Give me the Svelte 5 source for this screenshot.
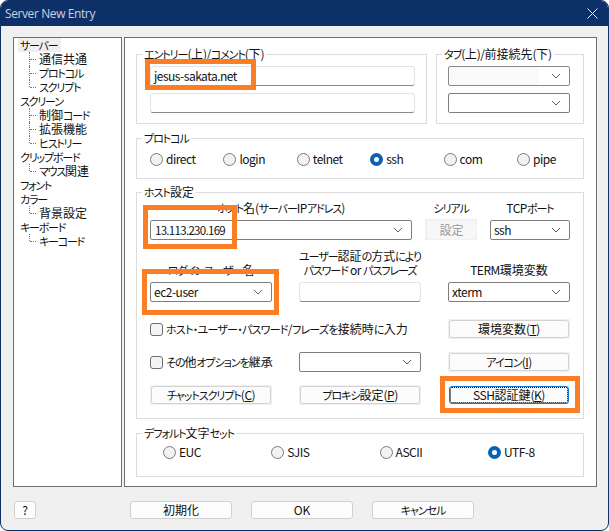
<script>
	const tree = [
		{ label: 'サーバー', selected: true, kids: ['通信共通', 'プロトコル', 'スクリプト'] },
		{ label: 'スクリーン', kids: ['制御コード', '拡張機能', 'ヒストリー'] },
		{ label: 'クリップボード', kids: ['マウス関連'] },
		{ label: 'フォント', kids: [] },
		{ label: 'カラー', kids: ['背景設定'] },
		{ label: 'キーボード', kids: ['キーコード'] }
	];

	const protocols = ['direct', 'login', 'telnet', 'ssh', 'com', 'pipe'];
	const charsets = ['EUC', 'SJIS', 'ASCII', 'UTF-8'];

	// orange callouts drawn over the screenshot
	const marks = [
		{ x: 145, y: 59, w: 111, h: 31 },
		{ x: 143, y: 205, w: 94, h: 44 },
		{ x: 142, y: 269, w: 137, h: 46 },
		{ x: 440, y: 376, w: 140, h: 37 }
	];

	const runPattern = /[\u3040-\u30ff・]+|[\u4e00-\u9fff]+|[^\u3040-\u30ff・\u4e00-\u9fff]+/g;

	function runs(text) {
		return (text.match(runPattern) ?? []).map((part) => {
			let kind = 'latin';
			if (/[\u3040-\u30ff・]/.test(part)) kind = 'kana';
			else if (/[\u4e00-\u9fff]/.test(part)) kind = 'kanji';
			return { part, kind };
		});
	}
</script>

{#snippet t(text)}{#each runs(text) as r}<span class={r.kind}>{r.part}</span>{/each}{/snippet}

{#snippet chevron()}
	<svg class="chevron" width="10" height="6" viewBox="0 0 10 6"><path d="M1 1 L5 5 L9 1" fill="none" stroke="#606060" stroke-width="1" /></svg>
{/snippet}

{#snippet combo(value, cls = '')}
	<div class="combo {cls}"><div class="value">{@render t(value)}</div>{@render chevron()}</div>
{/snippet}

{#snippet radio(label, on)}
	<label class="radio"><i class:on></i><div>{@render t(label)}</div></label>
{/snippet}

{#snippet btn(label, key, cls = '')}
	<div class="btn {cls}"><div class="face">{@render t(label + '(')}<u>{@render t(key)}</u>{@render t(')')}</div></div>
{/snippet}

<div class="window">
	<header class="titlebar">
		<span>Server New Entry</span>
		<svg width="11" height="11" viewBox="0 0 11 11"><path d="M0.5 0.5 L10.5 10.5 M10.5 0.5 L0.5 10.5" stroke="#e8ecf3" stroke-width="1" /></svg>
	</header>

	<div class="content">
		<nav class="tree">
			<ul>
				{#each tree as node}
					<li>
						<div class="node" class:selected={node.selected}>{@render t(node.label)}</div>
						{#if node.kids.length}
							<ul class="kids">
								{#each node.kids as kid}
									<li class="kid">{@render t(kid)}</li>
								{/each}
							</ul>
						{/if}
					</li>
				{/each}
			</ul>
		</nav>

		<main class="panel">
			<div class="top-row">
				<fieldset class="entry">
					<legend>{@render t('エントリー(上)/コメント(下)')}</legend>
					<div class="stack">
						<div class="input name">{@render t('jesus-sakata.net')}</div>
						<div class="input"></div>
					</div>
				</fieldset>
				<fieldset class="tab">
					<legend>{@render t('タブ(上)/前接続先(下)')}</legend>
					<div class="stack">
						{@render combo('', 'dim')}
						{@render combo('')}
					</div>
				</fieldset>
			</div>

			<fieldset class="protocol">
				<legend>{@render t('プロトコル')}</legend>
				<div class="protocol-row">
					{#each protocols as p}
						{@render radio(p, p === 'ssh')}
					{/each}
				</div>
			</fieldset>

			<fieldset class="host">
				<legend>{@render t('ホスト設定')}</legend>
				<div class="host-top">
					<div class="cap">{@render t('ホスト名(サーバーIPアドレス)')}</div>
					<div class="cap">{@render t('シリアル')}</div>
					<div class="cap">{@render t('TCPポート')}</div>
					{@render combo('13.113.230.169', 'ip')}
					<div class="disabled-btn"><div class="face">{@render t('設定')}</div></div>
					{@render combo('ssh')}
				</div>
				<div class="host-grid">
					<div class="cap low">{@render t('ログインユーザー名')}</div>
					<div class="cap low auth">{@render t('ユーザー認証の方式により')}<br />{@render t('パスワード or パスフレーズ')}</div>
					<div class="cap low term">{@render t('TERM環境変数')}</div>

					{@render combo('ec2-user')}
					<div class="input col3"></div>
					{@render combo('xterm', 'col5')}

					<label class="check long span3 gap-top"><i></i><div>{@render t('ホスト・ユーザー・パスワード/フレーズを接続時に入力')}</div></label>
					{@render btn('環境変数', 'T', 'col5 gap-top')}

					<label class="check"><i></i><div>{@render t('その他オプションを継承')}</div></label>
					{@render combo('', 'col3')}
					{@render btn('アイコン', 'I', 'col5')}

					{@render btn('チャットスクリプト', 'C')}
					{@render btn('プロキシ設定', 'P', 'col3')}
					{@render btn('SSH認証鍵', 'K', 'col5 focused')}
				</div>
			</fieldset>

			<fieldset class="charset">
				<legend>{@render t('デフォルト文字セット')}</legend>
				<div class="charset-row">
					{#each charsets as c}
						{@render radio(c, c === 'UTF-8')}
					{/each}
				</div>
			</fieldset>
		</main>
	</div>

	<footer class="actions">
		<button class="help">?</button>
		<button class="first">{@render t('初期化')}</button>
		<button>OK</button>
		<button>{@render t('キャンセル')}</button>
	</footer>

	{#each marks as m}
		<div class="mark" style="left:{m.x - 1}px;top:{m.y - 1}px;width:{m.w}px;height:{m.h}px"></div>
	{/each}
</div>

<style>
	:global(body) {
		margin: 0;
		background: #fff;
	}

	.window {
		position: relative;
		box-sizing: border-box;
		width: 609px;
		height: 531px;
		border: 1px solid #0e3069;
		border-radius: 8px;
		background: #f0f0f0;
		overflow: hidden;
		font: 12px/14px "Noto Sans CJK JP", "Noto Sans", sans-serif;
		font-feature-settings: "palt";
		color: #111;
	}

	.kana {
		font-size: 11px;
		letter-spacing: -1.05px;
	}

	.latin {
		letter-spacing: -0.5px;
	}

	.titlebar {
		display: flex;
		align-items: center;
		justify-content: space-between;
		height: 25px;
		padding: 0 10px 0 4px;
		background: #0e3069;
		color: #c9d2e0;
		font: 12px/25px "Open Sans", sans-serif;
		letter-spacing: -0.4px;
	}

	.content {
		display: flex;
		gap: 2px;
		height: 450px;
		padding: 11px 0 0 12px;
	}

	.tree {
		box-sizing: border-box;
		width: 109px;
		height: 450px;
		border: 1px solid #6e6e6e;
		background: #fff;
	}

	.tree ul {
		margin: 0;
		padding: 0;
		list-style: none;
	}

	.tree .kana {
		letter-spacing: -1.2px;
	}

	.node {
		width: fit-content;
		height: 14px;
		margin-left: 4px;
		padding: 0 3px 0 2px;
	}

	.selected {
		background: #efefef;
	}

	.kid {
		position: relative;
		height: 14px;
		padding-left: 25px;
	}

	.kid::before {
		content: '';
		position: absolute;
		left: 15px;
		top: 0;
		bottom: 0;
		border-left: 1px dotted #777;
	}

	.kid:last-child::before {
		bottom: 7px;
	}

	.kid::after {
		content: '';
		position: absolute;
		left: 16px;
		top: 7px;
		width: 6px;
		border-top: 1px dotted #777;
	}

	.panel {
		box-sizing: border-box;
		width: 473px;
		height: 450px;
		padding: 9px 12px 0 11px;
		border: 1px solid #6e6e6e;
		background: #fff;
	}

	fieldset {
		box-sizing: border-box;
		margin: 0;
		padding: 0;
		min-width: 0;
		border: 1px solid #dcdcdc;
	}

	legend {
		margin-left: 5px;
		padding: 0 2px;
		height: 14px;
		white-space: nowrap;
	}

	.top-row {
		display: flex;
		gap: 9px;
	}

	.entry {
		width: 291px;
		height: 77px;
		padding-top: 5px;
	}

	.tab {
		width: 148px;
		height: 77px;
		padding-top: 5px;
	}

	.stack {
		display: flex;
		flex-direction: column;
		gap: 7px;
		width: 122px;
		margin-left: 11px;
	}

	.entry .stack {
		width: 265px;
		margin-left: 13px;
	}

	.input {
		box-sizing: border-box;
		height: 20px;
		padding: 0 3px;
		border: 1px solid #e4e4e4;
		border-bottom-color: #8a8a8a;
		border-radius: 3px;
		line-height: 18px;
		background: #fff;
	}

	.combo {
		box-sizing: border-box;
		display: flex;
		align-items: center;
		justify-content: space-between;
		height: 20px;
		padding: 0 8px 0 3px;
		border: 1px solid #7f7f7f;
		border-radius: 2px;
		background: #fff;
	}

	.dim {
		border-color: #8a8a8a;
		background: linear-gradient(to right, #fafafa 90px, #fff 90px);
	}

	.ip .value {
		padding-left: 1px;
		font-size: 11.5px;
	}

	.ip .value .latin {
		letter-spacing: -0.7px;
	}

	.protocol {
		width: 448px;
		height: 48px;
		margin-top: 7px;
		padding-top: 7px;
	}

	.protocol-row {
		display: grid;
		grid-template-columns: repeat(6, 73.4px);
		margin-left: 13px;
	}

	.radio {
		display: flex;
		align-items: center;
		gap: 3px;
		height: 14px;
	}

	.radio i {
		box-sizing: border-box;
		flex: none;
		width: 13px;
		height: 13px;
		border: 1px solid #7a7a7a;
		border-radius: 50%;
		background: #f2f2f2;
	}

	.radio i.on {
		border: 4px solid #0a62b5;
		background: #fff;
	}

	.host {
		width: 448px;
		height: 234px;
		margin-top: 6px;
		padding-top: 2px;
	}

	.cap {
		text-align: center;
		white-space: nowrap;
	}

	.host-top {
		display: grid;
		grid-template-columns: 262px 52px 80px;
		column-gap: 13px;
		row-gap: 5px;
		width: 420px;
		margin-left: 13px;
	}

	.disabled-btn {
		box-sizing: border-box;
		height: 21px;
		margin-top: -1px;
		padding: 2px 1px 1px 2px;
		background: #f0f0f0;
	}

	.disabled-btn .face {
		height: 100%;
		border-radius: 3px;
		background: #f7f7f7;
		color: #9a9a9a;
		text-align: center;
		line-height: 18px;
	}

	.host-grid {
		display: grid;
		grid-template-columns: 122px 27px 122px 27px 122px;
		grid-auto-rows: min-content;
		row-gap: 13px;
		width: 420px;
		margin: 9px 0 0 13px;
	}

	.low {
		align-self: end;
		margin-bottom: -8px;
	}

	.auth {
		grid-column: 3;
		line-height: 13px;
	}

	.term {
		grid-column: 5;
	}

	.col3 {
		grid-column: 3;
	}

	.col5 {
		grid-column: 5;
	}

	.span3 {
		grid-column: 1 / span 3;
	}

	.gap-top {
		margin-top: 4px;
	}

	.check {
		display: flex;
		align-items: center;
		gap: 3px;
		white-space: nowrap;
	}

	.long .kana {
		letter-spacing: -0.75px;
	}

	.check i {
		box-sizing: border-box;
		flex: none;
		width: 13px;
		height: 13px;
		border: 1px solid #6e6e6e;
		border-radius: 3px;
		background: #f4f4f4;
	}

	.btn {
		box-sizing: border-box;
		height: 20px;
		padding: 1px;
		background: #f0f0f0;
	}

	.btn .face {
		box-sizing: border-box;
		height: 100%;
		border: 1px solid #d2d2d2;
		border-radius: 3px;
		background: #fcfcfc;
		text-align: center;
		line-height: 16px;
		white-space: nowrap;
	}

	.focused {
		background: #fff;
	}

	.btn.focused .face {
		border-color: #0a78d4;
		outline: 1px dotted #000;
		outline-offset: -2px;
	}

	.charset {
		width: 448px;
		height: 51px;
		margin-top: 7px;
		padding-top: 5px;
	}

	.charset-row {
		display: grid;
		grid-template-columns: repeat(4, 108.3px);
		margin-left: 26px;
	}

	.actions {
		display: flex;
		gap: 19px;
		padding: 14px 0 0 13px;
	}

	.actions button {
		box-sizing: border-box;
		width: 102px;
		height: 18px;
		padding: 0;
		border: 1px solid #d0d0d0;
		border-radius: 3px;
		background: #fdfdfd;
		font: inherit;
		font-feature-settings: inherit;
		color: inherit;
	}

	.actions .help {
		width: 22px;
	}

	.actions .first {
		margin-left: 75px;
	}

	.mark {
		position: absolute;
		box-sizing: border-box;
		border: 5px solid #fc7e24;
	}
</style>
